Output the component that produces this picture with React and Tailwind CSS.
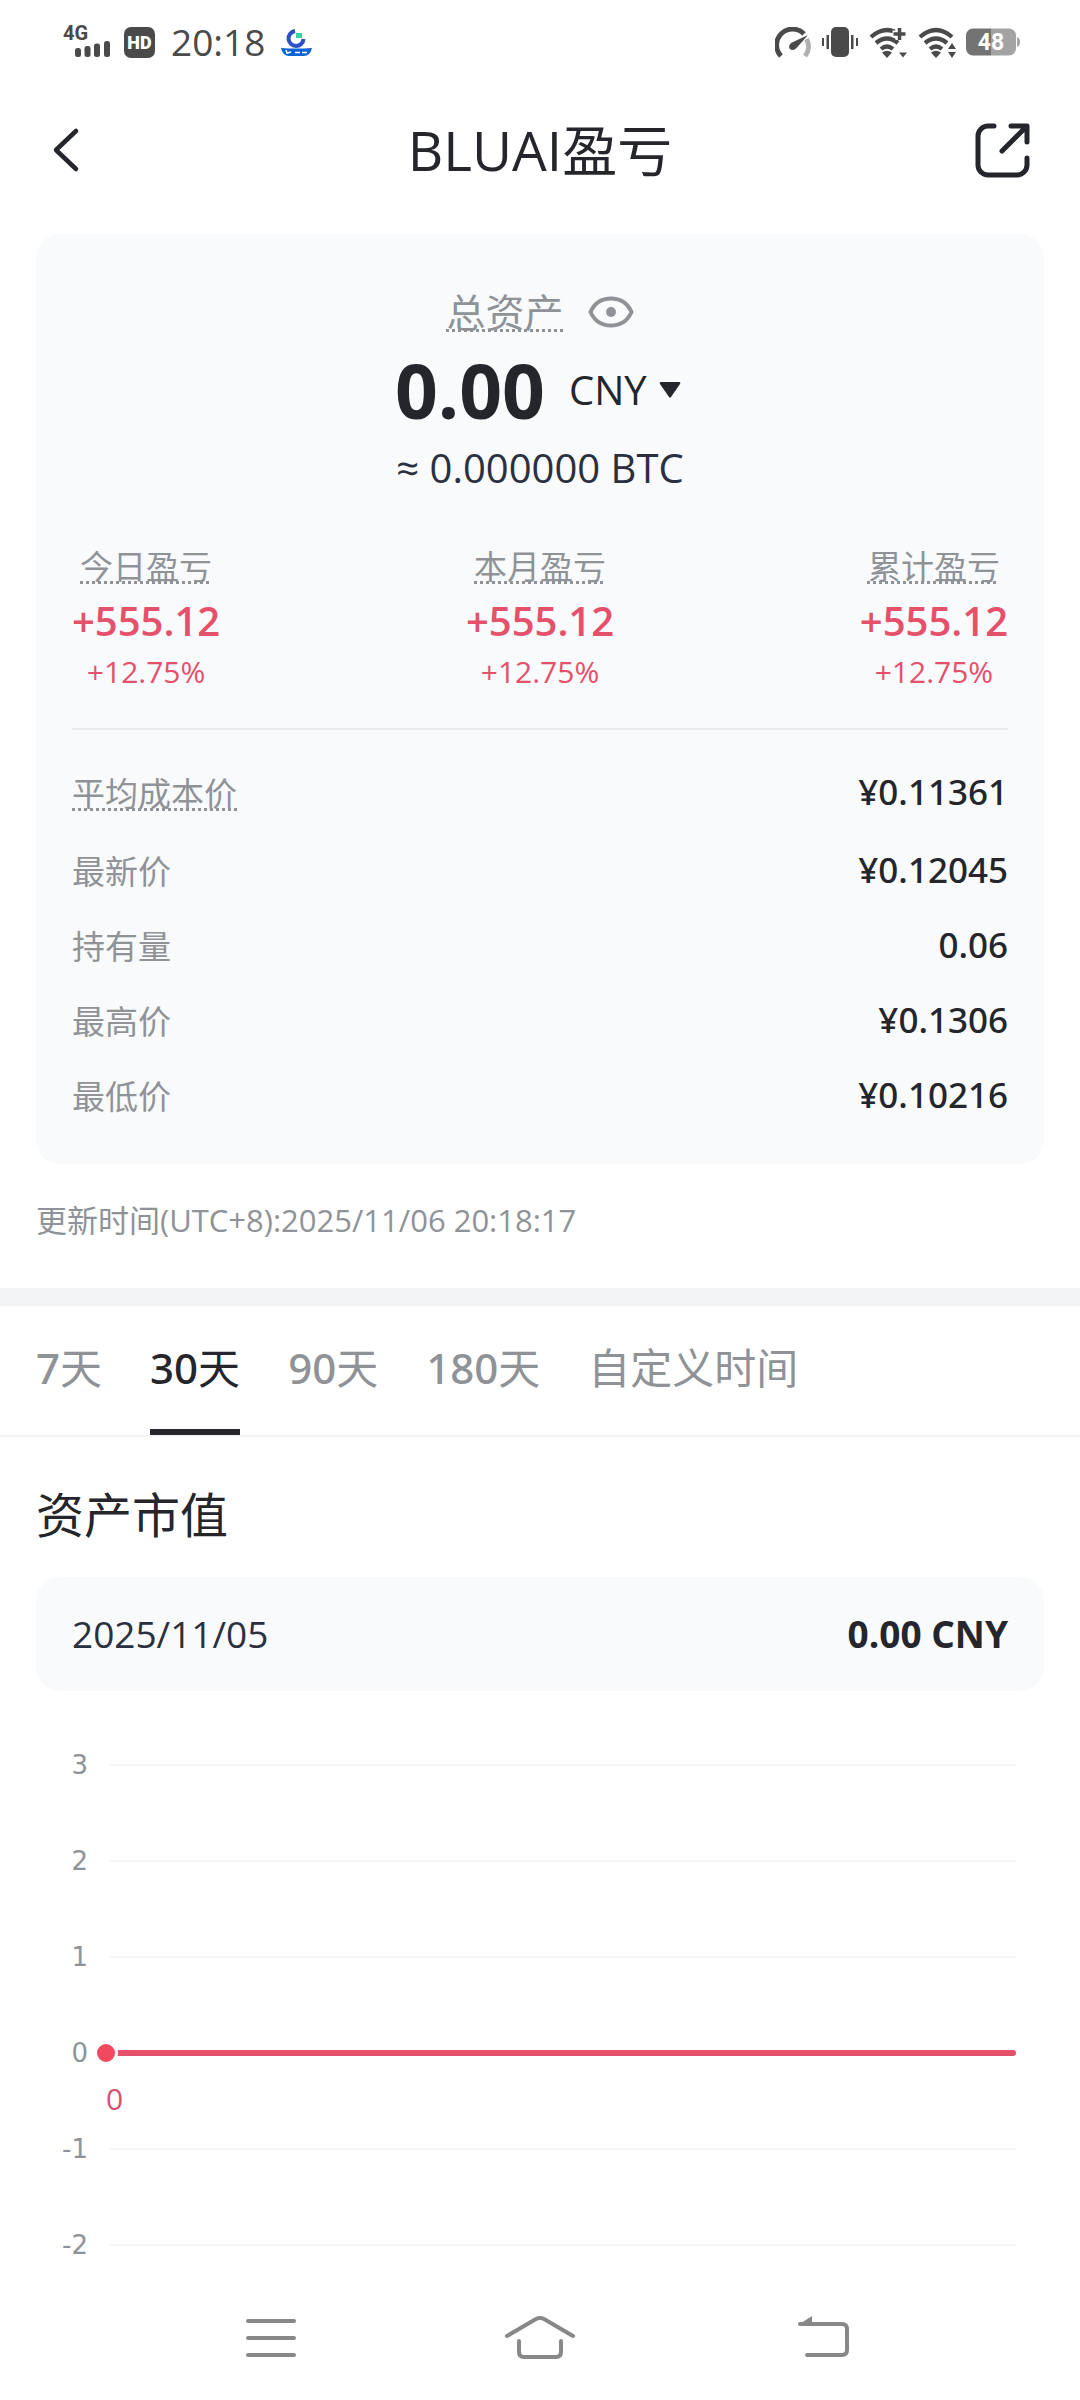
import React from 'react';

const stats = [
  { label: '今日盈亏', value: '+555.12', rate: '+12.75%' },
  { label: '本月盈亏', value: '+555.12', rate: '+12.75%' },
  { label: '累计盈亏', value: '+555.12', rate: '+12.75%' },
];

const details = [
  { label: '最新价', value: '¥0.12045' },
  { label: '持有量', value: '0.06' },
  { label: '最高价', value: '¥0.1306' },
  { label: '最低价', value: '¥0.10216' },
];

const ranges = [
  { count: '7', unit: '天' },
  { count: '30', unit: '天', active: true },
  { count: '90', unit: '天' },
  { count: '180', unit: '天' },
  { count: '', unit: '自定义时间' },
];

const ticks = [3, 2, 1, 0, -1, -2];

function WifiArcs() {
  return (
    <>
      <path d="M2 10 Q18 -4 34 10" />
      <path d="M7 16 Q18 7 29 16" />
      <path d="M12 22 Q18 17 24 22" />
      <path d="M13 25.5 Q18 22 23 25.5 L18 31Z" fill="currentColor" stroke="none" />
    </>
  );
}

function StatusBar() {
  return (
    <div className="flex h-[84px] items-center justify-between pl-[62px] pr-[60px] text-[#4a4a4a]">
      <div className="flex items-center">
        <svg width="50" height="42" viewBox="0 -4 50 42" fill="currentColor" className="mr-3">
          <text x="1" y="15" fontSize="20" fontWeight="700" fontFamily="Roboto, sans-serif">4G</text>
          <rect x="13" y="23" width="6" height="9" rx="2.5" />
          <rect x="22.5" y="21" width="6" height="11" rx="2.5" />
          <rect x="32" y="18.5" width="6" height="13.5" rx="2.5" />
          <rect x="42" y="16" width="6" height="16" rx="2.5" />
        </svg>
        <svg width="31" height="31" viewBox="0 0 31 31" className="mr-4">
          <rect width="31" height="31" rx="7" fill="currentColor" />
          <text x="15.5" y="22" fontSize="18" fontWeight="900" fontFamily="Roboto, sans-serif" textAnchor="middle" fill="#fff">HD</text>
        </svg>
        <span className="text-[37px] leading-[48px]">20:18</span>
        <svg width="31" height="28" viewBox="0 0 31 28" className="ml-4">
          <path d="M14 3 A7.5 7.5 0 1 0 22.5 11" fill="none" stroke="#2b50c8" strokeWidth="4" />
          <rect x="15" y="5" width="6" height="5" fill="#3fd0a0" />
          <path d="M0 20 Q15 21 31 20 Q29 28 23 28 H8 Q2 28 0 20Z" fill="#0b63d6" />
          <path d="M5 22 l1 3 l4 -1 M14 24.5 h5 M21 24.5 h5" stroke="#fff" strokeWidth="1.6" fill="none" />
        </svg>
      </div>
      <div className="flex items-center">
        <svg width="36" height="31" viewBox="0 0 36 31" fill="none" strokeWidth="5" className="mr-[11px]">
          <path d="M6 29 A15 15 0 0 1 29 7" stroke="currentColor" />
          <path d="M31.5 12 A15 15 0 0 1 30 29" stroke="#b0b0b0" />
          <path d="M33 8 L22 20.5 Q18 25 14.5 21.5 Q13 18 17 15.5Z" fill="currentColor" />
        </svg>
        <svg width="36" height="30" viewBox="0 0 36 30" fill="currentColor" className="mr-[11px]">
          <rect x="9" y="0" width="18" height="30" rx="5" />
          <path d="M0 11h2v8h-2z M4.5 8h2.5v14h-2.5z M29 8h2.5v14h-2.500z M34 11h2v8h-2z" />
        </svg>
        <svg width="39" height="31" viewBox="0 0 39 31" fill="none" stroke="currentColor" strokeWidth="4.2" className="mr-[10px]">
          <WifiArcs />
          <path d="M30 0 V13 M23.5 7 H38" stroke="#fff" strokeWidth="7" />
          <path d="M30.5 1 V13 M24.5 7 H36.5" strokeWidth="3.5" />
          <path d="M30 25.5 h8 l-4 5z" fill="currentColor" stroke="none" />
        </svg>
        <svg width="39" height="31" viewBox="0 0 39 31" fill="none" stroke="currentColor" strokeWidth="4.2" className="mr-[9px]">
          <WifiArcs />
          <path d="M30 22 h8 l-4 -6z M30 25 h8 l-4 6z" fill="currentColor" stroke="none" />
        </svg>
        <svg width="54" height="28" viewBox="0 0 54 28">
          <path d="M25 0.5 H43 a7 7 0 0 1 7 7 V20.5 a7 7 0 0 1 -7 7 H25Z M51 9 q3 1 3 5 q0 4 -3 5z" fill="#a3a3a3" />
          <path d="M25 0.5 H7 a7 7 0 0 0 -7 7 V20.5 a7 7 0 0 0 7 7 H25Z" fill="#737373" />
          <text x="25" y="22" fontSize="23" fontWeight="700" fontFamily="Roboto, sans-serif" textAnchor="middle" fill="#fff">48</text>
        </svg>
      </div>
    </div>
  );
}

function Header() {
  return (
    <header className="flex h-[132px] items-center justify-between px-12">
      <button type="button" aria-label="返回" className="flex w-16 items-center">
        <svg width="36" height="48" viewBox="0 0 36 48" fill="none" stroke="currentColor" strokeWidth="4.5" strokeLinecap="round" strokeLinejoin="round">
          <path d="M28 5 L8 24 L28 43" />
        </svg>
      </button>
      <h1 className="text-[55px] leading-[72px]">BLUAI盈亏</h1>
      <button type="button" aria-label="分享" className="flex w-16 items-center justify-end">
        <svg width="58" height="58" viewBox="0 0 58 58" fill="none" stroke="currentColor" strokeWidth="5" strokeLinecap="round" strokeLinejoin="round">
          <path d="M20 5 H14 A10 10 0 0 0 4 15 V44 A10 10 0 0 0 14 54 H43 A10 10 0 0 0 53 44 V37" />
          <path d="M37 5 H53 V21 M52 6 L28 30" />
        </svg>
      </button>
    </header>
  );
}

function Summary() {
  return (
    <section className="mx-9 mt-[18px] rounded-3xl bg-[#f9fafc] px-9 pt-12 pb-8">
      <div className="flex h-[60px] items-center justify-center gap-6">
        <span className="text-[39px] leading-[60px] text-[#8f9397] underline decoration-dotted decoration-[3px] underline-offset-2 [text-decoration-skip-ink:none]">总资产</span>
        <button type="button" aria-label="隐藏资产" className="text-[#8f9397]">
          <svg width="46" height="32" viewBox="0 0 46 32" fill="none" stroke="currentColor" strokeWidth="4">
            <path d="M2.5 16 C7 6 15 2.5 23 2.5 S39 6 43.5 16 C39 26 31 29.5 23 29.5 S7 26 2.5 16Z" />
            <circle cx="23" cy="16" r="5" fill="currentColor" stroke="none" />
          </svg>
        </button>
      </div>
      <div className="flex h-24 items-center justify-center pr-1">
        <span className="text-[75px] leading-[96px] font-bold">0.00</span>
        <label className="ml-6 flex items-center gap-3">
          <select aria-label="币种" className="appearance-none bg-transparent text-[40px] leading-[60px]">
            <option>CNY</option>
          </select>
          <svg width="22" height="16" viewBox="0 0 22 16" fill="currentColor">
            <path d="M2 0 H20 Q22 0 21 2 L12 15 Q11 16 10 15 L1 2 Q0 0 2 0Z" />
          </svg>
        </label>
      </div>
      <p className="text-center text-[40px] leading-[60px] text-[#2b3040]">≈ 0.000000 BTC</p>

      <div className="mt-[42px] flex justify-between border-b-2 border-[#ebecef] pb-8">
        {stats.map((item) => (
          <div key={item.label} className="flex flex-col items-center">
            <span className="text-[33px] leading-[54px] text-[#8f9397] underline decoration-dotted decoration-[3px] underline-offset-2 [text-decoration-skip-ink:none]">{item.label}</span>
            <span className="text-[40px] leading-[54px] font-semibold text-[#e5506a]">{item.value}</span>
            <span className="text-[30px] leading-[48px] text-[#e5506a]">{item.rate}</span>
          </div>
        ))}
      </div>

      <dl className="mt-[22px]">
        <div className="flex h-20 items-center justify-between">
          <dt className="pt-1 text-[33px] leading-[54px] text-[#8f9397] underline decoration-dotted decoration-[3px] underline-offset-2 [text-decoration-skip-ink:none]">平均成本价</dt>
          <dd className="font-['Noto_Sans',sans-serif] text-[35px] leading-[54px] font-medium">¥0.11361</dd>
        </div>
        {details.map((item) => (
          <div key={item.label} className="flex h-[75px] items-center justify-between">
            <dt className="pt-1 text-[33px] leading-[54px] text-[#8f9397]">{item.label}</dt>
            <dd className="font-['Noto_Sans',sans-serif] text-[35px] leading-[54px] font-medium">{item.value}</dd>
          </div>
        ))}
      </dl>
    </section>
  );
}

function RangeTabs() {
  return (
    <nav className="flex gap-12 border-b-2 border-[#f3f3f5] px-9">
      {ranges.map((range) => (
        <button
          key={range.count + range.unit}
          type="button"
          className={
            range.active
              ? 'h-[129px] border-b-6 border-[#24262b] text-[42px] leading-[60px]'
              : 'h-[129px] border-b-6 border-transparent text-[42px] leading-[60px] text-[#8f9397]'
          }
        >
          <span className="font-['Noto_Sans',sans-serif] font-medium">{range.count}</span>{range.unit}
        </button>
      ))}
    </nav>
  );
}

function Chart() {
  return (
    <div className="mt-[26px] pl-9 pr-16">
      {ticks.map((tick) => (
        <div key={tick} className="relative flex h-24 items-center gap-[22px]">
          <span className="w-[52px] text-right font-['DejaVu_Sans',sans-serif] text-[26px] leading-[36px] text-[#8f9397]">{tick}</span>
          <div className="h-0.5 flex-1 bg-[#f6f6f7]"></div>
          {tick === 0 && (
            <>
              <div className="absolute left-[70px] right-0 h-1.5 rounded-full bg-[#e5506a]"></div>
              <div className="absolute left-[58px] size-6 rounded-full border-3 border-white bg-[#f2495f]"></div>
              <span className="absolute left-[70px] top-[76px] text-[30px] leading-[36px] text-[#d9506a]">0</span>
            </>
          )}
        </div>
      ))}
    </div>
  );
}

function SystemNav() {
  return (
    <div className="mt-auto flex h-[106px] items-center justify-between px-[228px] pb-4 text-[#888888]">
      <button type="button" aria-label="菜单" className="flex w-[72px] justify-end">
        <svg width="58" height="48" viewBox="0 0 58 48" fill="none" stroke="currentColor" strokeWidth="4" strokeLinecap="round">
          <path d="M6 6 H52 M6 23 H52 M6 40 H52" />
        </svg>
      </button>
      <button type="button" aria-label="主页">
        <svg width="74" height="48" viewBox="0 0 74 48" fill="none" stroke="currentColor" strokeWidth="4" strokeLinecap="round" strokeLinejoin="round">
          <path d="M4 21 L33 4 Q37 2 41 4 L70 21" />
          <path d="M16 26 V37 Q16 42 21 42 H53 Q58 42 58 37 V26" />
        </svg>
      </button>
      <button type="button" aria-label="后退" className="flex w-[72px] justify-end">
        <svg width="56" height="48" viewBox="0 0 56 48" fill="none" stroke="currentColor" strokeWidth="4" strokeLinecap="round" strokeLinejoin="round">
          <path d="M4 9 H46 Q51 9 51 14 V35 Q51 40 46 40 H11" />
          <path d="M2 10 L16 1 V10Z" fill="currentColor" stroke="none" />
        </svg>
      </button>
    </div>
  );
}

export default function App() {
  return (
    <div className="flex min-h-screen flex-col bg-white font-['Open_Sans','Noto_Sans_CJK_SC',sans-serif] text-[#24262b]">
      <StatusBar />
      <Header />
      <Summary />
      <p className="px-9 pt-8 pb-11 text-[31px] leading-[48px] text-[#8f9397]">更新时间(UTC+8):2025/11/06 20:18:17</p>
      <div className="h-[18px] bg-[#f3f4f6]"></div>
      <RangeTabs />
      <main>
        <h2 className="px-9 pt-12 text-[48px] leading-[60px]">资产市值</h2>
        <div className="mx-9 mt-8 flex h-[114px] items-center justify-between rounded-3xl bg-[#f9fafc] px-9">
          <span className="text-[37px] leading-[54px] text-[#2b3040]">2025/11/05</span>
          <span className="text-[37px] leading-[54px] font-bold">0.00 CNY</span>
        </div>
        <Chart />
      </main>
      <SystemNav />
    </div>
  );
}
